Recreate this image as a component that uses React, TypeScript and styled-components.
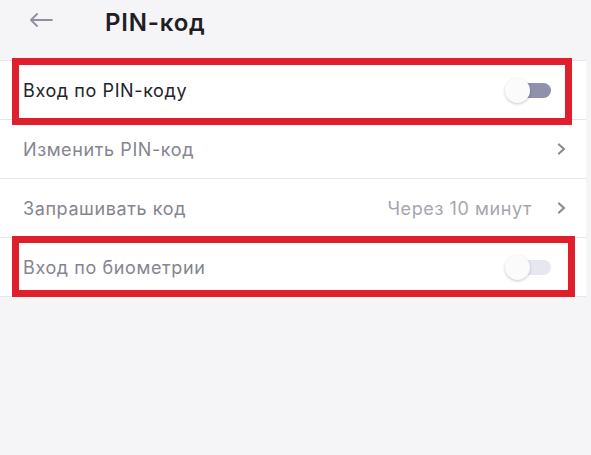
import * as React from 'react'
import styled, { createGlobalStyle } from 'styled-components'

const GlobalStyle = createGlobalStyle`
  html, body {
    margin: 0;
    padding: 0;
    background: #f5f5f7;
  }
  body {
    font-family: Inter, "Noto Sans", sans-serif;
    -webkit-font-smoothing: antialiased;
  }
`

const Page = styled.div`
  width: 591px;
  height: 455px;
  background: #f5f5f7;
  overflow: hidden;
`

const Header = styled.header`
  height: 60px;
  display: flex;
  align-items: center;
  padding-left: 29px;
  gap: 52px;
`

const BackButton = styled.button`
  display: flex;
  align-items: center;
  padding: 0;
  border: 0;
  background: none;
  margin-top: -20px;
  cursor: pointer;
`

const Title = styled.h1`
  margin: 0;
  margin-top: -16px;
  font-size: 24px;
  font-weight: 600;
  color: #1e1f26;
  letter-spacing: 0.8px;
`

const List = styled.ul`
  list-style: none;
  margin: 0 5px 0 0;
  padding: 0;
  background: #fff;
  border-top: 1px solid #e7e7eb;
`

const Row = styled.li`
  position: relative;
  height: 58px;
  display: flex;
  align-items: center;
  padding: 0 19px 0 23px;
  border-bottom: 1px solid #e7e7eb;
`

const Label = styled.span<{ $muted?: boolean }>`
  flex: 1;
  font-size: 18px;
  letter-spacing: 0.6px;
  color: ${p => (p.$muted ? '#85858f' : '#23242b')};
`

const Value = styled.span`
  font-size: 18px;
  letter-spacing: 0.6px;
  color: #a6a6af;
  margin-right: 25px;
`

const Switch = styled.span<{ $disabled?: boolean }>`
  position: relative;
  width: 46px;
  height: 26px;
  margin-right: 16px;
  display: flex;
  align-items: center;

  &::before {
    content: '';
    position: absolute;
    right: 0;
    width: 36px;
    height: 15px;
    border-radius: 8px;
    background: ${p => (p.$disabled ? '#e7e7ef' : '#8f92aa')};
  }

  &::after {
    content: '';
    position: absolute;
    left: 0;
    width: 25px;
    height: 25px;
    border-radius: 50%;
    background: #fbfbfc;
    box-shadow: 0 1px 3px rgba(0, 0, 0, 0.22);
  }
`

const Highlight = styled.span<{ $top: number; $bottom: number; $right: number }>`
  position: absolute;
  top: ${p => p.$top}px;
  bottom: ${p => p.$bottom}px;
  left: 12px;
  right: ${p => p.$right}px;
  border: 7px solid #df1f2c;
  pointer-events: none;
`

const ArrowLeft = () => (
  <svg width="24" height="14" viewBox="0 0 24 14" fill="none">
    <path
      d="M23 7H2M8 1L2 7l6 6"
      stroke="#8e8fa2"
      strokeWidth="1.8"
      strokeLinecap="round"
      strokeLinejoin="round"
    />
  </svg>
)

const Chevron = () => (
  <svg width="10" height="12" viewBox="0 0 10 12" fill="none">
    <path
      d="M2 1.5l5 4.5-5 4.5"
      stroke="#8b8b94"
      strokeWidth="2.2"
      strokeLinecap="round"
      strokeLinejoin="round"
    />
  </svg>
)

export default function App() {
  return (
    <Page>
      <GlobalStyle />
      <Header>
        <BackButton aria-label="Назад">
          <ArrowLeft />
        </BackButton>
        <Title>PIN-код</Title>
      </Header>
      <List>
        <Row>
          <Label>Вход по PIN-коду</Label>
          <Switch />
          <Highlight $top={-3} $bottom={-6} $right={14} />
        </Row>
        <Row>
          <Label $muted>Изменить PIN-код</Label>
          <Chevron />
        </Row>
        <Row>
          <Label $muted>Запрашивать код</Label>
          <Value>Через 10 минут</Value>
          <Chevron />
        </Row>
        <Row>
          <Label $muted>Вход по биометрии</Label>
          <Switch $disabled />
          <Highlight $top={-2} $bottom={-1} $right={11} />
        </Row>
      </List>
    </Page>
  )
}
